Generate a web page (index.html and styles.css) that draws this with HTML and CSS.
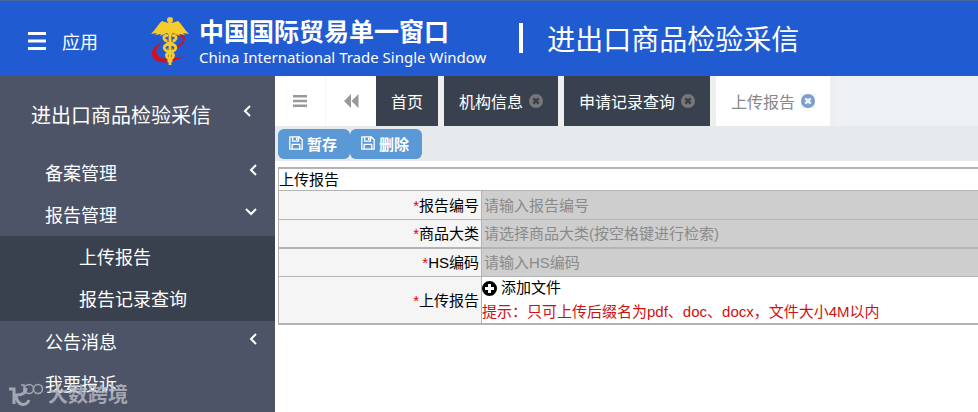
FILE: index.html
```html
<!DOCTYPE html>
<html lang="zh-CN">
<head>
  <meta charset="UTF-8">
  <meta name="viewport" content="width=device-width, initial-scale=1.0">
  <title>中国国际贸易单一窗口</title>
  <link rel="stylesheet" href="styles.css">
</head>
<body>
  <svg class="sprite" width="0" height="0" aria-hidden="true">
    <symbol id="icon-close" viewBox="0 0 14 14">
      <path fill-rule="evenodd" d="M7 0a7 7 0 1 1 0 14A7 7 0 0 1 7 0zM5.2 3.4 3.4 5.2 5.2 7 3.4 8.8l1.8 1.8L7 8.8l1.8 1.8 1.8-1.8L8.800 7l1.8-1.8-1.8-1.8L7 5.200z"/>
    </symbol>
    <symbol id="icon-save" viewBox="0 0 14 14">
      <path fill="none" stroke="currentColor" stroke-width="1.3" stroke-linejoin="round" d="M.8.8h9.4l3 3v9.4H.8zM3.6.8v4.4h6V.8M3.2 13V8.4h7.6V13"/>
      <path d="M7 1.5h1.6v2.8H7z"/>
    </symbol>
    <symbol id="icon-left" viewBox="0 0 12 12">
      <path fill="none" stroke="currentColor" stroke-width="2" d="M9 1 4 6l5 5"/>
    </symbol>
  </svg>

  <header class="header">
    <button class="apps" type="button">
      <svg width="18" height="18" viewBox="0 0 18 18"><path d="M0 0h18v3H0zM0 7.500h18v3H0zM0 15h18v3H0z"/></svg>
      应用
    </button>
    <a class="brand" href="#">
      <svg class="emblem" width="38" height="50" viewBox="0 0 38 50">
        <path fill="none" stroke="#d5101c" stroke-width="2.200" d="M12 34c11-1 22-7 21-13-1-4-8-3-14-1"/>
        <path fill="#d5101c" d="M1 37c0-6 5-10 11-12-5 4-8 8-6 12 3 6 14 6 27 2-8 6-20 8-27 5-3-2-5-4-5-7z"/>
        <path fill="#f6cb2b" d="M17 6 11 4C8 6 5 12 0 17l6-1-2 2 6-1-1 2 7-3 2 2v-5h2v5l2-2 7 3-1-2 6 1-2-2 6 1C33 12 30 6 27 4l-6 2z"/>
        <circle cx="19" cy="3" r="3" fill="#f6cb2b"/>
        <path fill="none" stroke="#f6cb2b" stroke-width="2.800" d="M19 5v43M17 19c-4-2-5 2-3 4l9 5c3 2 2 5-1 6l-5 2c-3 2-1 5 1 6l3 3M21 19c4-2 5 2 3 4l-9 5c-3 2-2 5 1 6l5 2c3 2 1 5-1 6l-3 3"/>
        <path fill="#a28b48" d="M16 23h2v2h-2zM20 23h2v2h-2zM16 31h2v2h-2zM20 31h2v2h-2zM17 38h1v2h-1zM20 38h1v2h-1z"/>
      </svg>
      <span class="brand-text">
        <strong>中国国际贸易单一窗口</strong>
        <span class="brand-en">China International Trade Single Window</span>
      </span>
    </a>
    <h1 class="system">进出口商品检验采信</h1>
  </header>

  <div class="layout">
    <nav class="sidebar">
      <a class="menu-title" href="#">进出口商品检验采信 <svg class="arrow"><use href="#icon-left"/></svg></a>
      <ul class="menu">
        <li><a href="#">备案管理 <svg class="arrow"><use href="#icon-left"/></svg></a></li>
        <li>
          <a href="#">报告管理 <svg class="arrow open"><use href="#icon-left"/></svg></a>
          <ul class="submenu">
            <li><a href="#">上传报告</a></li>
            <li><a href="#">报告记录查询</a></li>
          </ul>
        </li>
        <li><a href="#">公告消息 <svg class="arrow"><use href="#icon-left"/></svg></a></li>
        <li><a href="#">我要投诉</a></li>
      </ul>
      <div class="watermark">
        <svg width="34" height="24" viewBox="0 0 34 24">
          <path fill="none" stroke="currentColor" stroke-width="3" d="M0 6h5v15M17 5c0 5-4 7-10 7 1 11 10 12 13 5"/>
          <path fill="none" stroke="currentColor" stroke-width="1.500" d="M12 2h3v9"/>
          <circle cx="20" cy="6" r="4.500" fill="none" stroke="currentColor" stroke-width="1.500"/>
          <circle cx="29" cy="6" r="4.500" fill="none" stroke="currentColor" stroke-width="1.500"/>
        </svg>
        <span>大数跨境</span>
      </div>
    </nav>

    <main class="content">
      <div class="tabs">
        <button class="tab-tool" type="button" aria-label="菜单">
          <svg width="14" height="12" viewBox="0 0 14 12"><path d="M0 0h14v2.500H0zM0 4.800h14v2.500H0zM0 9.500h14V12H0z"/></svg>
        </button>
        <button class="tab-tool" type="button" aria-label="向左">
          <svg width="15" height="14" viewBox="0 0 15 14"><path d="M7 0v14L0 7zM14.500 0v14l-7-7z"/></svg>
        </button>
        <a class="tab" href="#">首页</a>
        <a class="tab" href="#">机构信息 <svg class="close"><use href="#icon-close"/></svg></a>
        <a class="tab" href="#">申请记录查询 <svg class="close"><use href="#icon-close"/></svg></a>
        <a class="tab active" href="#">上传报告 <svg class="close"><use href="#icon-close"/></svg></a>
        <div class="tab-rest"></div>
      </div>

      <div class="toolbar">
        <button type="button"><svg class="save"><use href="#icon-save"/></svg>暂存</button>
        <button type="button"><svg class="save"><use href="#icon-save"/></svg>删除</button>
      </div>

      <form class="report">
        <table>
          <tr class="table-title">
            <th colspan="2">上传报告</th>
          </tr>
          <tr>
            <th><label for="reportNo"><i>*</i>报告编号</label></th>
            <td class="field"><input type="text" id="reportNo" placeholder="请输入报告编号"></td>
          </tr>
          <tr class="thick">
            <th><label for="category"><i>*</i>商品大类</label></th>
            <td class="field"><input type="text" id="category" placeholder="请选择商品大类(按空格键进行检索)"></td>
          </tr>
          <tr>
            <th><label for="hsCode"><i>*</i>HS编码</label></th>
            <td class="field"><input type="text" id="hsCode" placeholder="请输入HS编码"></td>
          </tr>
          <tr class="thick">
            <th><label for="addFile"><i>*</i>上传报告</label></th>
            <td>
              <button class="add-file" type="button" id="addFile">
                <svg width="15" height="15" viewBox="0 0 15 15"><path fill-rule="evenodd" d="M7.500 0a7.500 7.500 0 1 1 0 15 7.500 7.500 0 0 1 0-15zM6 3v3H3v3h3v3h3V9h3V6H9V3z"/></svg>
                添加文件
              </button>
              <p class="hint">提示：只可上传后缀名为pdf、doc、docx，文件大小4M以内</p>
            </td>
          </tr>
        </table>
      </form>
    </main>
  </div>
</body>
</html>
```

FILE: styles.css
```css
:root {
  --blue: #205bd1;
  --side: #4e5467;
  --dark: #39414e;
  --line: #b4b4b4;
}
* {
  box-sizing: border-box;
}
body {
  margin: 0;
  min-height: 100vh;
  display: flex;
  flex-direction: column;
  overflow: hidden;
  font-family: "Liberation Sans", "Noto Sans CJK SC", sans-serif;
  font-size: 15px;
  color: #000;
  background: #fff;
}
button, input {
  font: inherit;
}
button {
  border: none;
  cursor: pointer;
}
a {
  color: inherit;
  text-decoration: none;
}
svg {
  fill: currentColor;
  flex: none;
}
ul {
  list-style: none;
  margin: 0;
  padding: 0;
}
.sprite {
  position: absolute;
}

/* Header */
.header {
  display: flex;
  align-items: center;
  height: 76px;
  padding: 6px 28px 0;
  background: var(--blue);
  border-top: 1px solid #48689e;
  color: #fff;
  white-space: nowrap;
}
.apps {
  display: flex;
  align-items: center;
  gap: 16px;
  padding: 0 0 2px;
  background: none;
  color: #fff;
  font-size: 18px;
}
.brand {
  display: flex;
  align-items: center;
  gap: 10px;
  margin-left: 53px;
}
.brand-text {
  display: flex;
  flex-direction: column;
  padding-top: 4px;
}
.brand-text strong {
  font-size: 25px;
  line-height: 26px;
}
.brand-en {
  font-family: "Noto Sans", sans-serif;
  font-size: 15px;
  line-height: 24px;
}
.system {
  display: flex;
  align-items: center;
  gap: 24px;
  margin: 0 0 7px 33px;
  font-size: 28px;
  font-weight: normal;
}
.system::before {
  content: "";
  width: 4px;
  height: 30px;
  background: #fff;
}

/* Sidebar */
.layout {
  display: flex;
  flex: 1;
}
.sidebar {
  position: relative;
  width: 275px;
  flex: none;
  background: var(--side);
  color: #fff;
}
.sidebar a {
  display: flex;
  align-items: center;
  justify-content: space-between;
}
.sidebar .menu-title {
  height: 76px;
  padding: 0 22px 0 31px;
  font-size: 20px;
}
.menu a {
  height: 42px;
  padding: 0 16px 3px 45px;
  font-size: 18px;
}
.menu .submenu {
  background: var(--dark);
  padding-bottom: 1px;
}
.menu .submenu a {
  padding-left: 79px;
}
.arrow {
  width: 12px;
  height: 12px;
  margin-bottom: 6px;
}
.menu .arrow {
  margin-bottom: 3px;
}
.arrow.open {
  transform: rotate(-90deg);
  margin-right: 2px;
}
.watermark {
  position: absolute;
  left: 9px;
  top: 304px;
  display: flex;
  align-items: center;
  gap: 5px;
  font-size: 20px;
  font-weight: bold;
  line-height: 30px;
  color: #b9bcc6;
  opacity: 0.8;
}

/* Tabs */
.content {
  flex: 1;
  min-width: 0;
}
.tabs {
  display: flex;
  height: 50px;
  background: #eee;
  font-size: 16px;
}
.tab-tool {
  display: flex;
  align-items: center;
  justify-content: center;
  width: 50px;
  padding: 0;
  background: #fff;
  color: #999;
}
.tab-tool + .tab-tool {
  width: 51px;
  border-left: 1px solid #f5f5f5;
}
.tab {
  display: flex;
  align-items: center;
  gap: 6px;
  margin-right: 6px;
  padding: 0 15px;
  background: var(--dark);
  color: #fff;
  white-space: nowrap;
}
.tab.active {
  background: #fff;
  color: #888;
}
.close {
  width: 14px;
  height: 14px;
  color: #777;
}
.active .close {
  color: #7e9cc8;
  background: #e9f3fc;
}
.tab-rest {
  flex: 1;
  background: #eef1f3;
}

/* Toolbar */
.toolbar {
  display: flex;
  padding: 3px 3px 2px;
  background: #e7eaed;
}
.toolbar button {
  display: flex;
  align-items: center;
  gap: 4px;
  height: 30px;
  padding: 0 13px 2px 11px;
  border-radius: 6px;
  background: #5a99d5;
  color: #fff;
  font-weight: bold;
}
.save {
  width: 14px;
  height: 14px;
}

/* Report form */
.report {
  padding: 6px 0 0 3px;
}
.report table {
  width: 100%;
  border-collapse: separate;
  border-spacing: 0;
  border-top: 2px solid var(--line);
  border-left: 1px solid var(--line);
}
.report th,
.report td {
  padding: 0;
  border-bottom: 1px solid var(--line);
  text-align: left;
  font-weight: normal;
}
.report .thick th,
.report .thick td {
  border-bottom-width: 2px;
}
.report th {
  width: 203px;
  padding: 0 2px 2px 0;
  border-right: 1px solid var(--line);
  background: #f5f5f5;
  text-align: right;
}
.report .table-title th {
  height: 22px;
  padding: 0;
  border-right: none;
  background: #fff;
  text-align: left;
  line-height: 21px;
}
.report i {
  color: #e00;
  font-style: normal;
}
.report .field {
  background: #cecece;
}
.field input {
  display: block;
  width: 100%;
  height: 28px;
  padding: 0 2px;
  border: none;
  outline: none;
  background: none;
}
.thick .field input,
.thick + tr .field input {
  height: 27px;
}
.field input::placeholder {
  color: #8a8a8a;
}
.add-file {
  display: flex;
  align-items: center;
  gap: 4px;
  padding: 0;
  background: none;
  color: #000;
  line-height: 22px;
}
.hint {
  margin: 0;
  padding-top: 2px;
  color: #d01010;
  line-height: 22px;
}
```
